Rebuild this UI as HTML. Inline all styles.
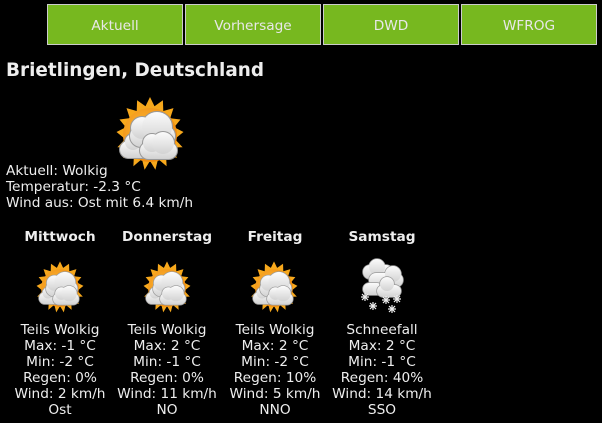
<!DOCTYPE html>
<html><head><meta charset="utf-8"><style>
body{margin:0;background:#000;width:602px;height:423px;overflow:hidden;position:relative;font-family:"DejaVu Sans","Liberation Sans",sans-serif;color:#eee;font-size:13.7px}
.b{position:absolute;top:4px;height:39px;background:#77b81f;border:1px solid #ccc;color:#e8e8e8;text-align:center;line-height:42px;font-size:13.7px}
.t{position:absolute;white-space:nowrap}
h1{position:absolute;left:6px;top:60px;margin:0;font-size:18.4px;font-weight:bold;color:#eee}
.col{position:absolute;top:229px;width:110px;text-align:center;line-height:16px}
.col b{display:block;margin-bottom:77px}
svg{position:absolute}
</style></head><body>
<div class="b" style="left:47px;width:134px">Aktuell</div>
<div class="b" style="left:185px;width:134px">Vorhersage</div>
<div class="b" style="left:323px;width:134px">DWD</div>
<div class="b" style="left:461px;width:134px">WFROG</div>
<h1>Brietlingen, Deutschland</h1>

<svg width="0" height="0" style="position:absolute">
<defs>
<radialGradient id="sg" cx="0.4" cy="0.4" r="0.6"><stop offset="0" stop-color="#fbb938"/><stop offset="1" stop-color="#f08c10"/></radialGradient>
<linearGradient id="cg" x1="0" y1="0" x2="0" y2="1"><stop offset="0" stop-color="#fbfbfb"/><stop offset="1" stop-color="#d2d2d2"/></linearGradient>
<g id="c1"><rect x="10" y="46" width="34" height="17" rx="8.5"/><circle cx="23" cy="47" r="8"/></g>
<g id="c2"><rect x="20" y="30" width="45" height="22" rx="11"/><circle cx="32" cy="33" r="11"/><circle cx="47" cy="32" r="15"/></g>
<g id="c3"><rect x="30" y="47" width="37" height="17" rx="8.5"/><circle cx="42" cy="48" r="9"/><circle cx="53" cy="48" r="11"/></g>
<g id="pc">
<polygon fill="#f7a81c" points="40,2 44.5,11.2 52.9,5.3 53.3,16 63.5,13.1 60.2,23.2 70.5,24.5 64.2,32.2 73.5,37 64.8,44 72.6,52.3 62.4,52.5 66.9,62.9 56.1,60.4 56.6,71.3 48.1,64 45.4,74.8 40,65.9 34.6,74.8 31.9,64 23.4,71.3 23.9,60.4 13.1,62.9 17.6,52.5 7.4,52.3 15.2,44 6.5,37 15.8,32.2 9.5,24.5 19.8,23.2 16.5,13.1 26.7,16 27.1,5.3 35.5,11.2"/>
<circle cx="40" cy="40" r="27" fill="url(#sg)"/>
<use href="#c1" fill="#999" stroke="#999" stroke-width="2"/><use href="#c1" fill="url(#cg)"/>
<use href="#c2" fill="#999" stroke="#999" stroke-width="2"/><use href="#c2" fill="url(#cg)"/>
<use href="#c3" fill="#999" stroke="#999" stroke-width="2"/><use href="#c3" fill="url(#cg)"/>
</g>
<g id="s1"><rect x="8" y="10" width="30" height="14" rx="7"/><circle cx="22" cy="12" r="8"/></g>
<g id="s2"><rect x="14" y="18" width="34" height="14" rx="7"/><circle cx="38" cy="19" r="8"/></g>
<g id="s3"><rect x="8" y="28" width="20" height="12" rx="6"/></g>
<g id="s4"><rect x="22" y="30" width="24" height="12" rx="6"/><circle cx="32" cy="29" r="7"/></g>
</defs></svg>

<svg style="left:110px;top:95px" width="80" height="80" viewBox="0 0 80 80"><use href="#pc"/></svg>

<div class="t" style="left:6px;top:163px;line-height:16px">Aktuell: Wolkig<br>Temperatur: -2.3 °C<br>Wind aus: Ost mit 6.4 km/h</div>

<svg style="left:32px;top:260px" width="56" height="56" viewBox="0 0 80 80"><use href="#pc"/></svg>
<svg style="left:139px;top:260px" width="56" height="56" viewBox="0 0 80 80"><use href="#pc"/></svg>
<svg style="left:246px;top:260px" width="56" height="56" viewBox="0 0 80 80"><use href="#pc"/></svg>
<svg style="left:355px;top:255px" width="55" height="65" viewBox="0 0 55 65">
<use href="#s1" fill="#999" stroke="#999" stroke-width="1.5"/><use href="#s1" fill="url(#cg)"/>
<use href="#s2" fill="#999" stroke="#999" stroke-width="1.5"/><use href="#s2" fill="url(#cg)"/>
<use href="#s3" fill="#999" stroke="#999" stroke-width="1.5"/><use href="#s3" fill="url(#cg)"/>
<use href="#s4" fill="#999" stroke="#999" stroke-width="1.5"/><use href="#s4" fill="url(#cg)"/>
<g stroke="#eee" stroke-width="1.2">
<path d="M10,38v8M6,42h8M7,39l6,6M13,39l-6,6"/>
<path d="M18,47v8M14,51h8M15,48l6,6M21,48l-6,6"/>
<path d="M31,41v8M27,45h8M28,42l6,6M34,42l-6,6"/>
<path d="M42,40v8M38,44h8M39,41l6,6M45,41l-6,6"/>
<path d="M37,50v8M33,54h8M34,51l6,6M40,51l-6,6"/>
</g></svg>

<div class="col" style="left:5px"><b>Mittwoch</b>Teils Wolkig<br>Max: -1 °C<br>Min: -2 °C<br>Regen: 0%<br>Wind: 2 km/h<br>Ost</div>
<div class="col" style="left:112px"><b>Donnerstag</b>Teils Wolkig<br>Max: 2 °C<br>Min: -1 °C<br>Regen: 0%<br>Wind: 11 km/h<br>NO</div>
<div class="col" style="left:220px"><b>Freitag</b>Teils Wolkig<br>Max: 2 °C<br>Min: -2 °C<br>Regen: 10%<br>Wind: 5 km/h<br>NNO</div>
<div class="col" style="left:327px"><b>Samstag</b>Schneefall<br>Max: 2 °C<br>Min: -1 °C<br>Regen: 40%<br>Wind: 14 km/h<br>SSO</div>
</body></html>
